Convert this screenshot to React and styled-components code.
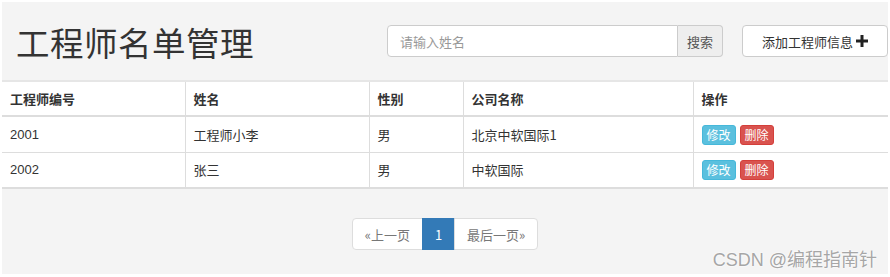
import React from "react";
import styled, { createGlobalStyle } from "styled-components";

const GlobalStyle = createGlobalStyle`
  html, body {
    margin: 0;
    padding: 0;
    background: #fff;
  }
  body {
    font-family: "Liberation Sans", "Noto Sans CJK SC", sans-serif;
    font-size: 14px;
    color: #333;
  }
`;

const Page = styled.div`
  position: relative;
  margin: 2px;
  width: 886px;
  height: 272px;
  background: #f4f4f4;
  overflow: hidden;
`;

const Header = styled.div`
  display: flex;
  align-items: center;
  height: 78px;
  padding-left: 14px;
  box-sizing: border-box;
`;

const Title = styled.h1`
  margin: 0;
  font-family: "Noto Sans CJK SC", sans-serif;
  font-weight: 400;
  font-size: 33.5px;
  color: #333;
  letter-spacing: 0.5px;
  flex: 1;
`;

const SearchGroup = styled.div`
  display: flex;
  height: 32px;
  margin-right: 19px;
`;

const SearchInput = styled.input`
  width: 291px;
  box-sizing: border-box;
  height: 32px;
  border: 1px solid #ccc;
  border-radius: 4px 0 0 4px;
  padding: 0 12px;
  font-family: "Noto Sans CJK SC", sans-serif;
  font-size: 13px;
  color: #555;
  outline: none;
  &::placeholder {
    color: #999;
  }
`;

const SearchAddon = styled.button`
  width: 45px;
  height: 32px;
  border: 1px solid #ccc;
  border-left: 0;
  border-radius: 0 4px 4px 0;
  background: #eee;
  color: #555;
  font-family: "Noto Sans CJK SC", sans-serif;
  font-size: 13px;
  padding: 0;
`;

const AddButton = styled.button`
  display: flex;
  align-items: center;
  justify-content: center;
  gap: 3px;
  width: 146px;
  height: 32px;
  border: 1px solid #ccc;
  border-radius: 4px;
  background: #fff;
  color: #333;
  font-family: "Noto Sans CJK SC", sans-serif;
  font-size: 13px;
  padding: 0;
`;

const Table = styled.table`
  width: 100%;
  border-collapse: collapse;
  background: #fff;
  font-size: 13px;
`;

const Th = styled.th`
  text-align: left;
  font-weight: 700;
  font-family: "Noto Sans CJK SC", sans-serif;
  height: 35px;
  padding: 0 8px;
  box-sizing: border-box;
  border: 1px solid #ddd;
  border-top: 0;
  border-bottom: 2px solid #ddd;
  width: ${(p) => p.$w}px;
  &:first-child { border-left: 0; }
  &:last-child { border-right: 0; }
`;

const Td = styled.td`
  height: 36px;
  padding: 0 8px;
  box-sizing: border-box;
  border: 1px solid #ddd;
  font-family: ${(p) => (p.$num ? '"Liberation Sans", sans-serif' : '"Noto Sans CJK SC", sans-serif')};
  &:first-child { border-left: 0; }
  &:last-child { border-right: 0; }
`;

const Row = styled.tr`
  &:last-child td { border-bottom: 2px solid #ddd; }
`;

const HeadRow = styled.tr`
  border-top: 2px solid #e6e6e6;
`;

const SmallButton = styled.button`
  height: 20px;
  padding: 0 4px;
  margin-right: 4px;
  border-radius: 3px;
  border: 1px solid ${(p) => (p.$danger ? "#d43f3a" : "#46b8da")};
  background: ${(p) => (p.$danger ? "#d9534f" : "#5bc0de")};
  color: #fff;
  font-family: "Noto Sans CJK SC", sans-serif;
  font-size: 12px;
  line-height: 18px;
  vertical-align: middle;
`;

const PagerWrap = styled.div`
  display: flex;
  justify-content: center;
  margin-top: 29px;
`;

const Pager = styled.ul`
  display: flex;
  list-style: none;
  margin: 0;
  padding: 0;
`;

const PageItem = styled.li`
  height: 32px;
  box-sizing: border-box;
  display: flex;
  align-items: center;
  padding: 0 12px;
  border: 1px solid ${(p) => (p.$active ? "#337ab7" : "#ddd")};
  margin-left: -1px;
  background: ${(p) => (p.$active ? "#337ab7" : "#fff")};
  color: ${(p) => (p.$active ? "#fff" : "#777")};
  font-family: "Noto Sans CJK SC", sans-serif;
  font-size: 13px;
  &:first-child {
    margin-left: 0;
    border-radius: 4px 0 0 4px;
  }
  &:last-child {
    border-radius: 0 4px 4px 0;
  }
`;

const Watermark = styled.div`
  position: absolute;
  right: 11px;
  bottom: 3px;
  font-family: "Liberation Sans", "Noto Sans CJK SC", sans-serif;
  font-size: 18px;
  color: #a6a6a6;
  text-shadow: 0 0 2px #fff, 0 0 2px #fff;
`;

const PlusIcon = () => (
  <svg width="12" height="12" viewBox="0 0 12 12">
    <path d="M4.5 0h3v4.5H12v3H7.5V12h-3V7.5H0v-3h4.5z" fill="#222" />
  </svg>
);

const engineers = [
  { id: "2001", name: "工程师小李", sex: "男", company: "北京中软国际1" },
  { id: "2002", name: "张三", sex: "男", company: "中软国际" },
];

export default function App() {
  return (
    <>
      <GlobalStyle />
      <Page>
        <Header>
          <Title>工程师名单管理</Title>
          <SearchGroup>
            <SearchInput placeholder="请输入姓名" />
            <SearchAddon>搜索</SearchAddon>
          </SearchGroup>
          <AddButton>
            添加工程师信息 <PlusIcon />
          </AddButton>
        </Header>
        <Table>
          <thead>
            <HeadRow>
              <Th $w={183}>工程师编号</Th>
              <Th $w={184}>姓名</Th>
              <Th $w={94}>性别</Th>
              <Th $w={230}>公司名称</Th>
              <Th>操作</Th>
            </HeadRow>
          </thead>
          <tbody>
            {engineers.map((e) => (
              <Row key={e.id}>
                <Td $num>{e.id}</Td>
                <Td>{e.name}</Td>
                <Td>{e.sex}</Td>
                <Td>{e.company}</Td>
                <Td>
                  <SmallButton>修改</SmallButton>
                  <SmallButton $danger>删除</SmallButton>
                </Td>
              </Row>
            ))}
          </tbody>
        </Table>
        <PagerWrap>
          <Pager>
            <PageItem>«上一页</PageItem>
            <PageItem $active>1</PageItem>
            <PageItem>最后一页»</PageItem>
          </Pager>
        </PagerWrap>
        <Watermark>CSDN @编程指南针</Watermark>
      </Page>
    </>
  );
}
